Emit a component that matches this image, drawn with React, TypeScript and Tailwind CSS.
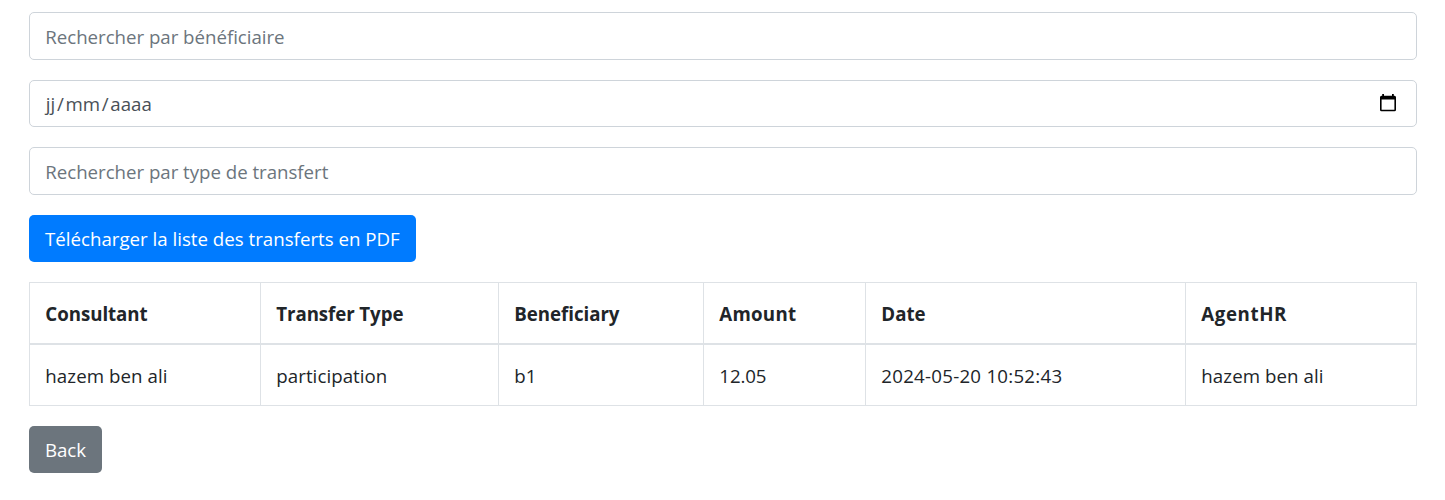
const columns = [
  { title: "Consultant", value: "hazem ben ali", width: "w-[231px]", head: "tracking-[-0.05px]", cell: "tracking-[0.08px]" },
  { title: "Transfer Type", value: "participation", width: "w-[238px]", head: "tracking-[-0.08px]", cell: "tracking-[0.05px]" },
  { title: "Beneficiary", value: "b1", width: "w-[205px]", head: "tracking-[-0.04px]", cell: "" },
  { title: "Amount", value: "12.05", width: "w-[162px]", head: "tracking-[0.25px]", cell: "tracking-[-0.1px]" },
  { title: "Date", value: "2024-05-20 10:52:43", width: "w-[320px]", head: "", cell: "tracking-[0.25px]" },
  { title: "AgentHR", value: "hazem ben ali", width: "w-[231px]", head: "tracking-[0.6px]", cell: "tracking-[0.08px]" },
];

function CalendarIcon() {
  return (
    <svg className="mb-px" width="16" height="18" viewBox="0 0 16 18" fill="#000">
      <path
        fillRule="evenodd"
        d="M2.2 0h1.8v1.7h8V0h1.8v1.7h.7A1.5 1.5 0 0 1 16 3.2v12.6a1.5 1.5 0 0 1-1.5 1.5h-13A1.5 1.5 0 0 1 0 15.8V3.2a1.5 1.5 0 0 1 1.5-1.5h.7zM1.6 5.4v10.3h12.8V5.4z"
      />
    </svg>
  );
}

const field =
  "block w-full rounded-[5px] border border-[#ced4da] bg-white px-[15.3px] tracking-[-0.03px] outline-none placeholder:text-[#6c757d] placeholder:opacity-100";

export default function App() {
  return (
    <main className="flex w-[1417px] flex-col items-start bg-white pt-3 pl-[29px] font-['Open_Sans','Noto_Sans',sans-serif] text-[18.7px] leading-[30px] text-[#212529]">
      <input className={`${field} h-12`} placeholder="Rechercher par bénéficiaire" />
      <div className={`${field} mt-5 flex h-[47px] items-center justify-between pr-5 text-[#495057]`}>
        <span className="flex gap-[1.5px] pl-[0.5px] tracking-[0.1px]">
          <span>jj</span>
          <span>/</span>
          <span>mm</span>
          <span>/</span>
          <span>aaaa</span>
        </span>
        <CalendarIcon />
      </div>
      <input className={`${field} mt-5 h-12`} placeholder="Rechercher par type de transfert" />
      <button className="mt-5 h-[47px] rounded-[5px] bg-[#007bff] px-4 text-white">
        Télécharger la liste des transferts en PDF
      </button>
      <table className="mt-5 w-[1388px] table-fixed border-separate border-spacing-0 border-t border-l border-[#dee2e6] text-left">
        <thead>
          <tr className="h-[62px]">
            {columns.map((c) => (
              <th key={c.title} className={`${c.width} ${c.head} border-r border-b-2 border-[#dee2e6] px-[15.3px] pt-0.5 pb-0 font-bold`}>
                {c.title}
              </th>
            ))}
          </tr>
        </thead>
        <tbody>
          <tr className="h-[61px]">
            {columns.map((c) => (
              <td key={c.title} className={`${c.cell} border-r border-b border-[#dee2e6] px-[15.3px] pt-0.5 pb-0`}>
                {c.value}
              </td>
            ))}
          </tr>
        </tbody>
      </table>
      <button className="mt-5 h-[47px] w-[73px] rounded-[5px] bg-[#6c757d] text-white">Back</button>
    </main>
  );
}
